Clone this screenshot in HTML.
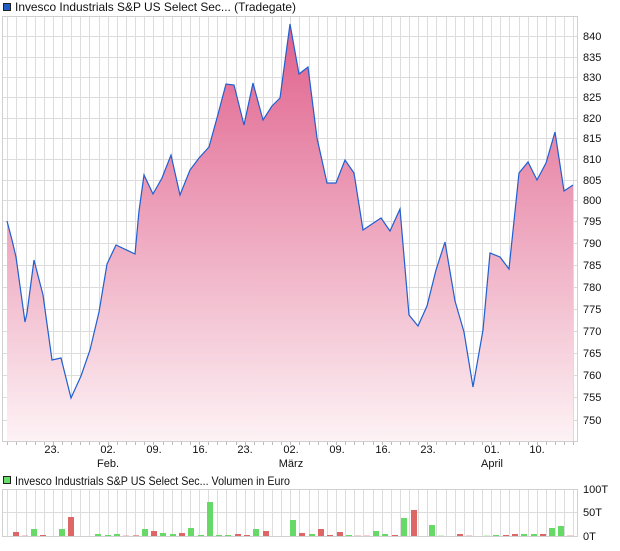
<!DOCTYPE html>
<html><head><meta charset="utf-8"><style>
body{margin:0;background:#fff;width:620px;height:546px;overflow:hidden;font-family:"Liberation Sans",Arial,sans-serif;}
svg text{font-family:"Liberation Sans",Arial,sans-serif;font-size:11px;fill:#111;}
</style></head><body>
<svg width="620" height="546" viewBox="0 0 620 546" xmlns="http://www.w3.org/2000/svg">
<defs>
<linearGradient id="g" x1="0" y1="24" x2="0" y2="441" gradientUnits="userSpaceOnUse">
<stop offset="0" stop-color="#e0608c"/>
<stop offset="0.5" stop-color="#eea8bf"/>
<stop offset="1" stop-color="#fdf2f5"/>
</linearGradient>
</defs>
<rect x="3.5" y="3.5" width="7" height="7" fill="#1f5cc8" stroke="#222" stroke-width="1"/>
<text x="15" y="11" style="font-size:12px" textLength="281" lengthAdjust="spacingAndGlyphs">Invesco Industrials S&amp;P US Select Sec... (Tradegate)</text>
<g id="pg" stroke="#dcdcdc" stroke-width="1" fill="none">
<path d="M3 36.5H578M3 57.5H578M3 77.5H578M3 97.5H578M3 118.5H578M3 138.5H578M3 159.5H578M3 180.5H578M3 200.5H578M3 221.5H578M3 243.5H578M3 265.5H578M3 287.5H578M3 309.5H578M3 331.5H578M3 353.5H578M3 375.5H578M3 397.5H578M3 420.5H578"/>
</g>
<g stroke="#dcdcdc" stroke-width="1" id="vl"></g>
<polygon fill="url(#g)" points="7,221 12,240 16,257 25,322 27,313 34,260 43,295 52,360 61,358 71,398 81,376 90,350 99,312 107,264 116,245 135,254 139,211 144,175 153,194 162,178 171,155 180,195 190,170 199,158 209,147 217,118 226,84 234,85 244,125 253,83 263,120 272,106 280,98 290,24 299,74 308,67 317,138 327,183 336,183 345,160 354,173 363,230 372,224 381,218 390,231 400,209 409,315 418,326 427,306 436,270 445,242 455,301 464,332 473,387 483,330 490,253 500,257 509,269 519,173 528,162 537,180 546,163 555,132 564,191 573,185 573,441 7,441"/>
<polyline fill="none" stroke="#1f5fd0" stroke-width="1.2" points="7,221 12,240 16,257 25,322 27,313 34,260 43,295 52,360 61,358 71,398 81,376 90,350 99,312 107,264 116,245 135,254 139,211 144,175 153,194 162,178 171,155 180,195 190,170 199,158 209,147 217,118 226,84 234,85 244,125 253,83 263,120 272,106 280,98 290,24 299,74 308,67 317,138 327,183 336,183 345,160 354,173 363,230 372,224 381,218 390,231 400,209 409,315 418,326 427,306 436,270 445,242 455,301 464,332 473,387 483,330 490,253 500,257 509,269 519,173 528,162 537,180 546,163 555,132 564,191 573,185"/>
<rect x="2.5" y="16.5" width="575" height="425" fill="none" stroke="#d0d0d0"/>
<g id="tk" stroke="#bbb"></g>
<g>
<text x="583" y="40">840</text><text x="583" y="61">835</text><text x="583" y="81">830</text><text x="583" y="101">825</text><text x="583" y="122">820</text><text x="583" y="142">815</text><text x="583" y="163">810</text><text x="583" y="184">805</text><text x="583" y="204">800</text><text x="583" y="225">795</text><text x="583" y="247">790</text><text x="583" y="269">785</text><text x="583" y="291">780</text><text x="583" y="313">775</text><text x="583" y="335">770</text><text x="583" y="357">765</text><text x="583" y="379">760</text><text x="583" y="401">755</text><text x="583" y="424">750</text>
</g>
<g text-anchor="middle">
<text x="52" y="453" text-anchor="middle">23.</text>
<text x="108" y="453" text-anchor="middle">02.</text><text x="108" y="467" text-anchor="middle">Feb.</text>
<text x="154" y="453" text-anchor="middle">09.</text>
<text x="200" y="453" text-anchor="middle">16.</text>
<text x="245" y="453" text-anchor="middle">23.</text>
<text x="291" y="453" text-anchor="middle">02.</text><text x="291" y="467" text-anchor="middle">März</text>
<text x="337" y="453" text-anchor="middle">09.</text>
<text x="383" y="453" text-anchor="middle">16.</text>
<text x="428" y="453" text-anchor="middle">23.</text>
<text x="492" y="453" text-anchor="middle">01.</text><text x="492" y="467" text-anchor="middle">April</text>
<text x="537" y="453" text-anchor="middle">10.</text>
</g>
<rect x="3.5" y="476.5" width="7" height="7" fill="#66dd66" stroke="#222"/>
<text x="15" y="485" style="font-size:12px" textLength="275" lengthAdjust="spacingAndGlyphs">Invesco Industrials S&amp;P US Select Sec... Volumen in Euro</text>
<path d="M3 512.5H578" stroke="#dcdcdc"/>
<g id="vl2" stroke="#dcdcdc"></g>
<g id="bars"></g>
<rect x="2.5" y="489.5" width="575" height="47" fill="none" stroke="#d0d0d0"/>
<text x="583" y="493">100T</text><text x="583" y="516">50T</text><text x="583" y="540">0T</text>
<script>
(function(){
var ns="http://www.w3.org/2000/svg";
function el(p,n,a){var e=document.createElementNS(ns,n);for(var k in a)e.setAttribute(k,a[k]);p.appendChild(e);}
var vl=document.getElementById('vl'),vl2=document.getElementById('vl2'),tk=document.getElementById('tk');
for(var i=0;i<63;i++){var x=Math.round(7.3+i*9.13)+0.5;
el(vl,'line',{x1:x,y1:17,x2:x,y2:441});
el(vl2,'line',{x1:x,y1:490,x2:x,y2:536});
el(tk,'line',{x1:x,y1:442,x2:x,y2:445});}
var B=[[16,'r',4.7],[24.8,'r',1],[34,'g',7.7],[42.8,'r',1.7],[61.6,'g',7.7],[71.2,'r',19.7],[98.4,'g',2.7],[108,'g',1.7],[116.8,'g',2.7],[126.4,'r',1],[136,'r',1.3],[145.2,'g',7.7],[154.4,'r',5.7],[163.2,'g',3.7],[172.8,'g',2.7],[182,'r',3.7],[191.2,'g',8.7],[200.8,'g',1.7],[210,'g',34.7],[219.2,'g',1.7],[228.4,'g',1.7],[237.6,'r',2.7],[246.8,'r',1.7],[256,'g',7.7],[265.6,'r',5.7],[293.2,'g',16.7],[302.4,'r',3.7],[311.6,'g',2.7],[320.8,'r',7.7],[330.4,'r',1.7],[339.6,'r',4.7],[348.8,'g',1.7],[358,'r',1],[367.2,'r',1],[376,'g',5.7],[385.2,'g',2.7],[394.8,'r',1.7],[404,'g',18.7],[413.6,'r',26.7],[431.6,'g',11.7],[440.8,'g',1],[460,'r',2.7],[469.2,'r',1],[487.2,'g',1],[496.4,'g',1.7],[505.6,'r',1.7],[515.2,'r',2.7],[524.4,'g',2.7],[533.6,'g',2.7],[542.8,'r',2.7],[552,'g',8.7],[561.2,'g',10.7],[570.4,'r',1]];
var bg=document.getElementById('bars');
B.forEach(function(b){el(bg,'rect',{x:Math.round(b[0]-3),y:536.7-b[2],width:6,height:b[2],fill:b[1]=='g'?'#66d966':'#dd6666'});});
})();
</script>
</svg>
</body></html>
